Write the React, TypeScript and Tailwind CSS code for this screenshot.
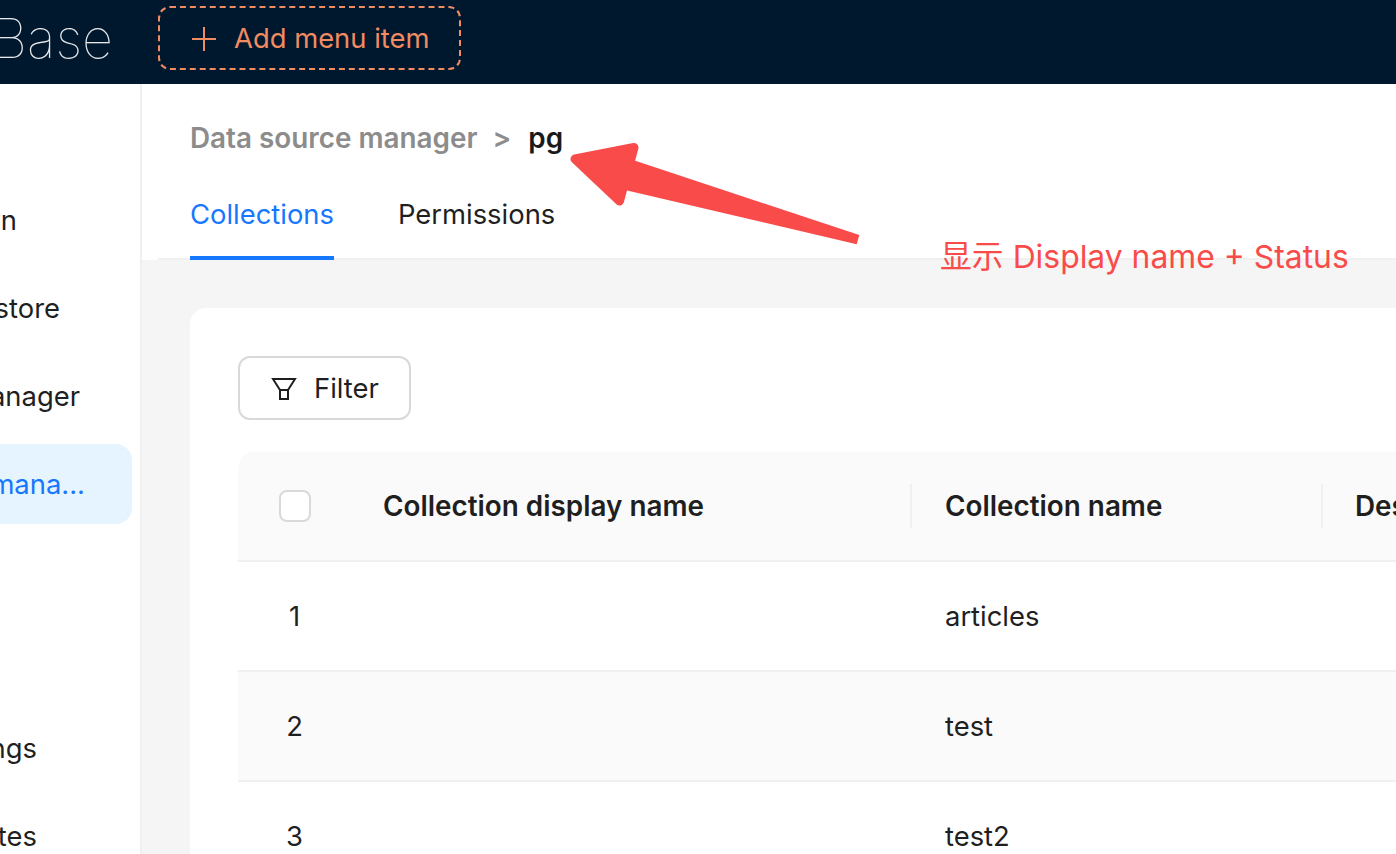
const menuItems = [
  { label: '', className: '' },
  { label: 'Authentication', className: 'pr-[115px]' },
  { label: 'Plugin store', className: 'pr-[72px]' },
  { label: 'File manager', className: 'pr-[52px]' },
  { label: 'Data source mana...', className: 'pr-[47px] bg-[#e6f4ff] text-[#1677ff]' },
  { label: '', className: '' },
  { label: '', className: '' },
  { label: 'Settings', className: 'pr-[95px]' },
  { label: 'Templates', className: 'pr-[95px]' },
];

const rows = [
  { id: 1, name: 'articles', className: 'bg-white' },
  { id: 2, name: 'test', className: 'bg-[#fafafa]' },
  { id: 3, name: 'test2', className: 'bg-white' },
];

function PlusIcon() {
  return (
    <svg width="24" height="24" viewBox="0 0 24 24" fill="none" stroke="#f18b62" strokeWidth="2">
      <path d="M0 12h24M12 0v24" />
    </svg>
  );
}

function FilterIcon() {
  return (
    <svg width="26" height="24" viewBox="0 0 26 24" fill="none" stroke="#1f1f1f" strokeWidth="2">
      <path d="M2 2h22l-7 11v9H9v-9z" strokeLinejoin="miter" />
      <path d="M9 13h8" />
    </svg>
  );
}

function Sidebar() {
  return (
    <aside className="w-[142px] shrink-0 flex flex-col gap-2 py-2 bg-white border-r-2 border-[#f0f0f0] overflow-hidden">
      {menuItems.map((item, i) => (
        <div
          key={i}
          className={`h-20 shrink-0 mr-2 pt-0.5 rounded-r-2xl flex items-center justify-end overflow-hidden whitespace-nowrap ${item.className}`}
        >
          {item.label}
        </div>
      ))}
    </aside>
  );
}

function PageHeader() {
  return (
    <div className="h-[176px] shrink-0 bg-white pl-4">
      <div className="h-full border-b-2 border-[#f0f0f0] pl-8">
        <div className="flex items-center h-[108px] pt-0.5 font-semibold text-[27.85px]">
          <span className="text-[#8c8c8c]">Data source manager</span>
          <span className="text-[#8c8c8c] ml-[15px]">&gt;</span>
          <span className="text-[#1a1a1a] ml-[17px]">pg</span>
        </div>
        <div className="flex gap-16 h-[66px]">
          <div className="h-[68px] border-b-4 border-[#1677ff] text-[#1677ff] flex items-center pb-[18px]">
            Collections
          </div>
          <div className="h-[68px] border-b-4 border-transparent flex items-center pb-[18px]">Permissions</div>
        </div>
      </div>
    </div>
  );
}

function CollectionsTable() {
  return (
    <div className="w-[1300px]">
      <div className="grid grid-cols-[113px_562px_410px_1fr] h-[110px] items-center bg-[#fafafa] rounded-t-2xl border-b-2 border-[#f0f0f0] font-semibold text-[27.85px]">
        <div className="pl-[41px]">
          <div className="w-8 h-8 bg-white border-2 border-[#d9d9d9] rounded-lg" />
        </div>
        <div className="h-11 pl-8 pt-0.5 mr-px flex items-center border-r-2 border-[#f0f0f0]">Collection display name</div>
        <div className="h-11 pl-8 pt-0.5 flex items-center border-r-2 border-[#f0f0f0]">Collection name</div>
        <div className="pl-8 pt-0.5">Description</div>
      </div>
      {rows.map((row) => (
        <div
          key={row.id}
          className={`grid grid-cols-[113px_562px_410px_1fr] h-[110px] pt-0.5 items-center border-b-2 border-[#f0f0f0] ${row.className}`}
        >
          <div className="text-center">{row.id}</div>
          <div />
          <div className="pl-8">{row.name}</div>
          <div />
        </div>
      ))}
    </div>
  );
}

export default function App() {
  return (
    <div
      className="relative h-[854px] overflow-hidden flex flex-col bg-[#f5f5f5] text-[27.4px] text-[#1f1f1f]"
      style={{ fontFamily: 'Inter, "Noto Sans CJK SC", sans-serif' }}
    >
      <header className="h-[84px] shrink-0 bg-[#00182e] flex items-start">
        <div className="w-[113px] h-full flex items-center justify-end overflow-hidden pb-2">
          <span className="text-[54px] font-thin text-[#e6e8ea] whitespace-nowrap">NocoBase</span>
        </div>
        <button className="ml-[45px] mt-1.5 w-[303px] h-16 pt-0.5 flex items-center gap-[18px] pl-8 border-2 border-dashed border-[#f18b62] rounded-xl text-[#f18b62]">
          <PlusIcon />
          Add menu item
        </button>
      </header>

      <div className="flex-1 flex min-h-0">
        <Sidebar />
        <main className="flex-1 min-w-0 flex flex-col">
          <PageHeader />
          <div className="pt-12 pl-12">
            <div className="bg-white rounded-tl-2xl pt-12 pl-12 h-[600px]">
              <button className="w-[173px] h-16 pt-0.5 flex items-center gap-[17px] pl-[31px] bg-white border-2 border-[#d9d9d9] rounded-xl mb-8">
                <FilterIcon />
                Filter
              </button>
              <CollectionsTable />
            </div>
          </div>
        </main>
      </div>

      {/* annotation drawn on top of the screenshot */}
      <svg className="absolute top-0 left-0" width="1396" height="854" fill="#f94c4a">
        <polygon points="575,159 634,147.5 619.5,201" stroke="#f94c4a" strokeWidth="9" strokeLinejoin="round" />
        <polygon points="630,159 859.3,235 856.7,244.3 625,190" />
      </svg>
      <div className="absolute top-[236px] left-[940px] text-[31.85px] leading-[42px] text-[#f94c4a] whitespace-nowrap">
        显示 Display name + Status
      </div>
    </div>
  );
}
